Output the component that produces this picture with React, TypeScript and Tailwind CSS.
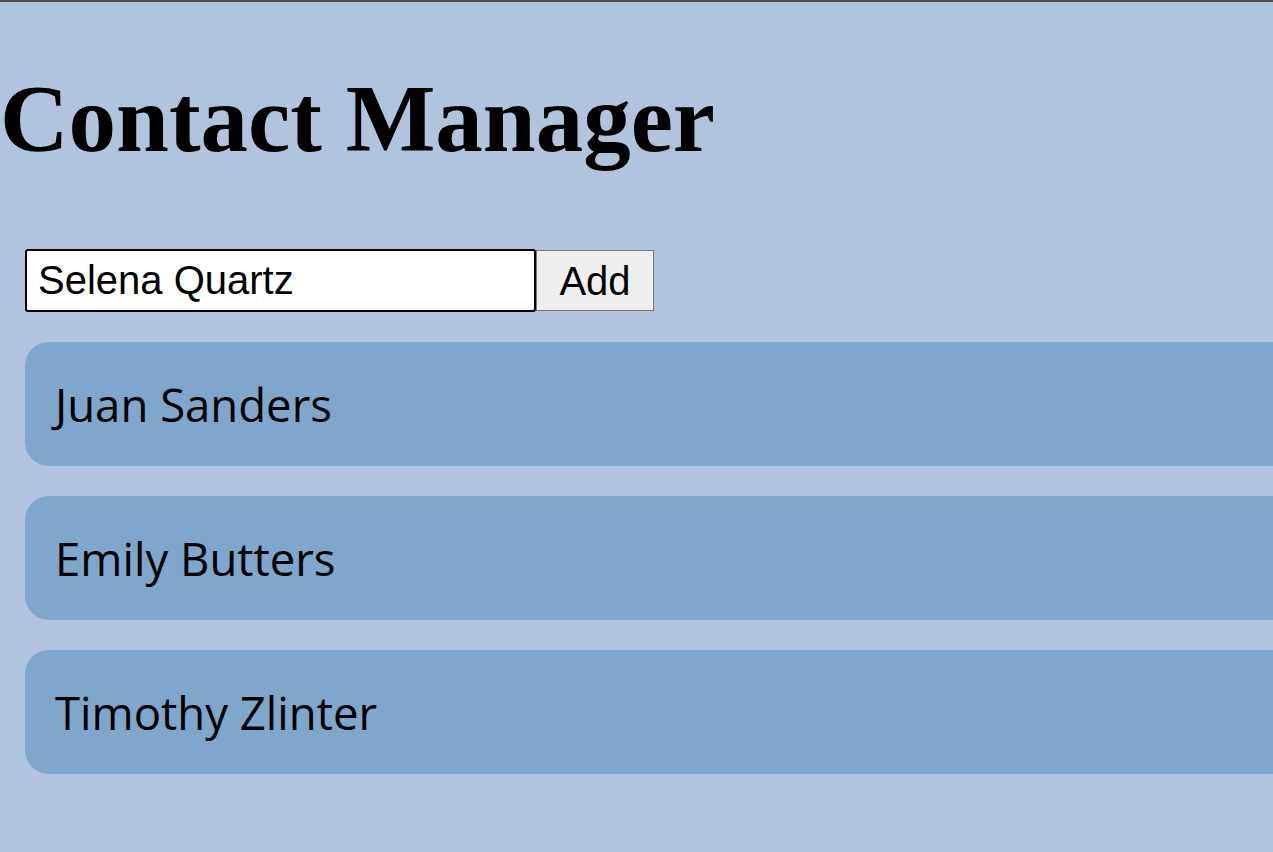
import { useState } from "react";

const App = () => {
  const [name, setName] = useState("Selena Quartz");
  const [contacts, setContacts] = useState<string[]>([
    "Juan Sanders",
    "Emily Butters",
    "Timothy Zlinter",
  ]);

  const addContact = () => {
    if (!name.trim()) return;
    setContacts([...contacts, name.trim()]);
    setName("");
  };

  return (
    <div className="min-h-[852px] overflow-hidden border-t-2 border-[#4f4f4f] bg-[#b0c4de]">
      <h1 className="mt-[64px] mb-[77px] text-[95px] leading-[106px] font-bold text-black [font-family:'Liberation_Serif',serif]">
        Contact Manager
      </h1>

      <div className="ml-[25px] flex items-center">
        {/* Input and Button */}
        <input
          type="text"
          value={name}
          onChange={(e) => setName(e.target.value)}
          className="h-[63px] w-[511px] rounded-[3px] border-2 border-black bg-white px-[11px] text-[40px] text-black caret-black outline-none [font-family:'Liberation_Sans',Arial,sans-serif]"
        />
        <button
          onClick={addContact}
          className="h-[61px] w-[118px] border border-[#767676] bg-[#efefef] text-[40px] text-black [font-family:'Liberation_Sans',Arial,sans-serif]"
        >
          Add
        </button>
      </div>

      {/* Contact list */}
      <div className="mt-[30px] ml-[25px] flex flex-col gap-[30px]">
        {contacts.map((c) => (
          <div
            key={c}
            className="w-[1320px] rounded-[24px] bg-[#7fa6cb] px-[30px] py-[30px] text-[45.5px] leading-[64px] text-black [font-family:'Open_Sans',sans-serif]"
          >
            {c}
          </div>
        ))}
      </div>
    </div>
  );
};

export default App;
